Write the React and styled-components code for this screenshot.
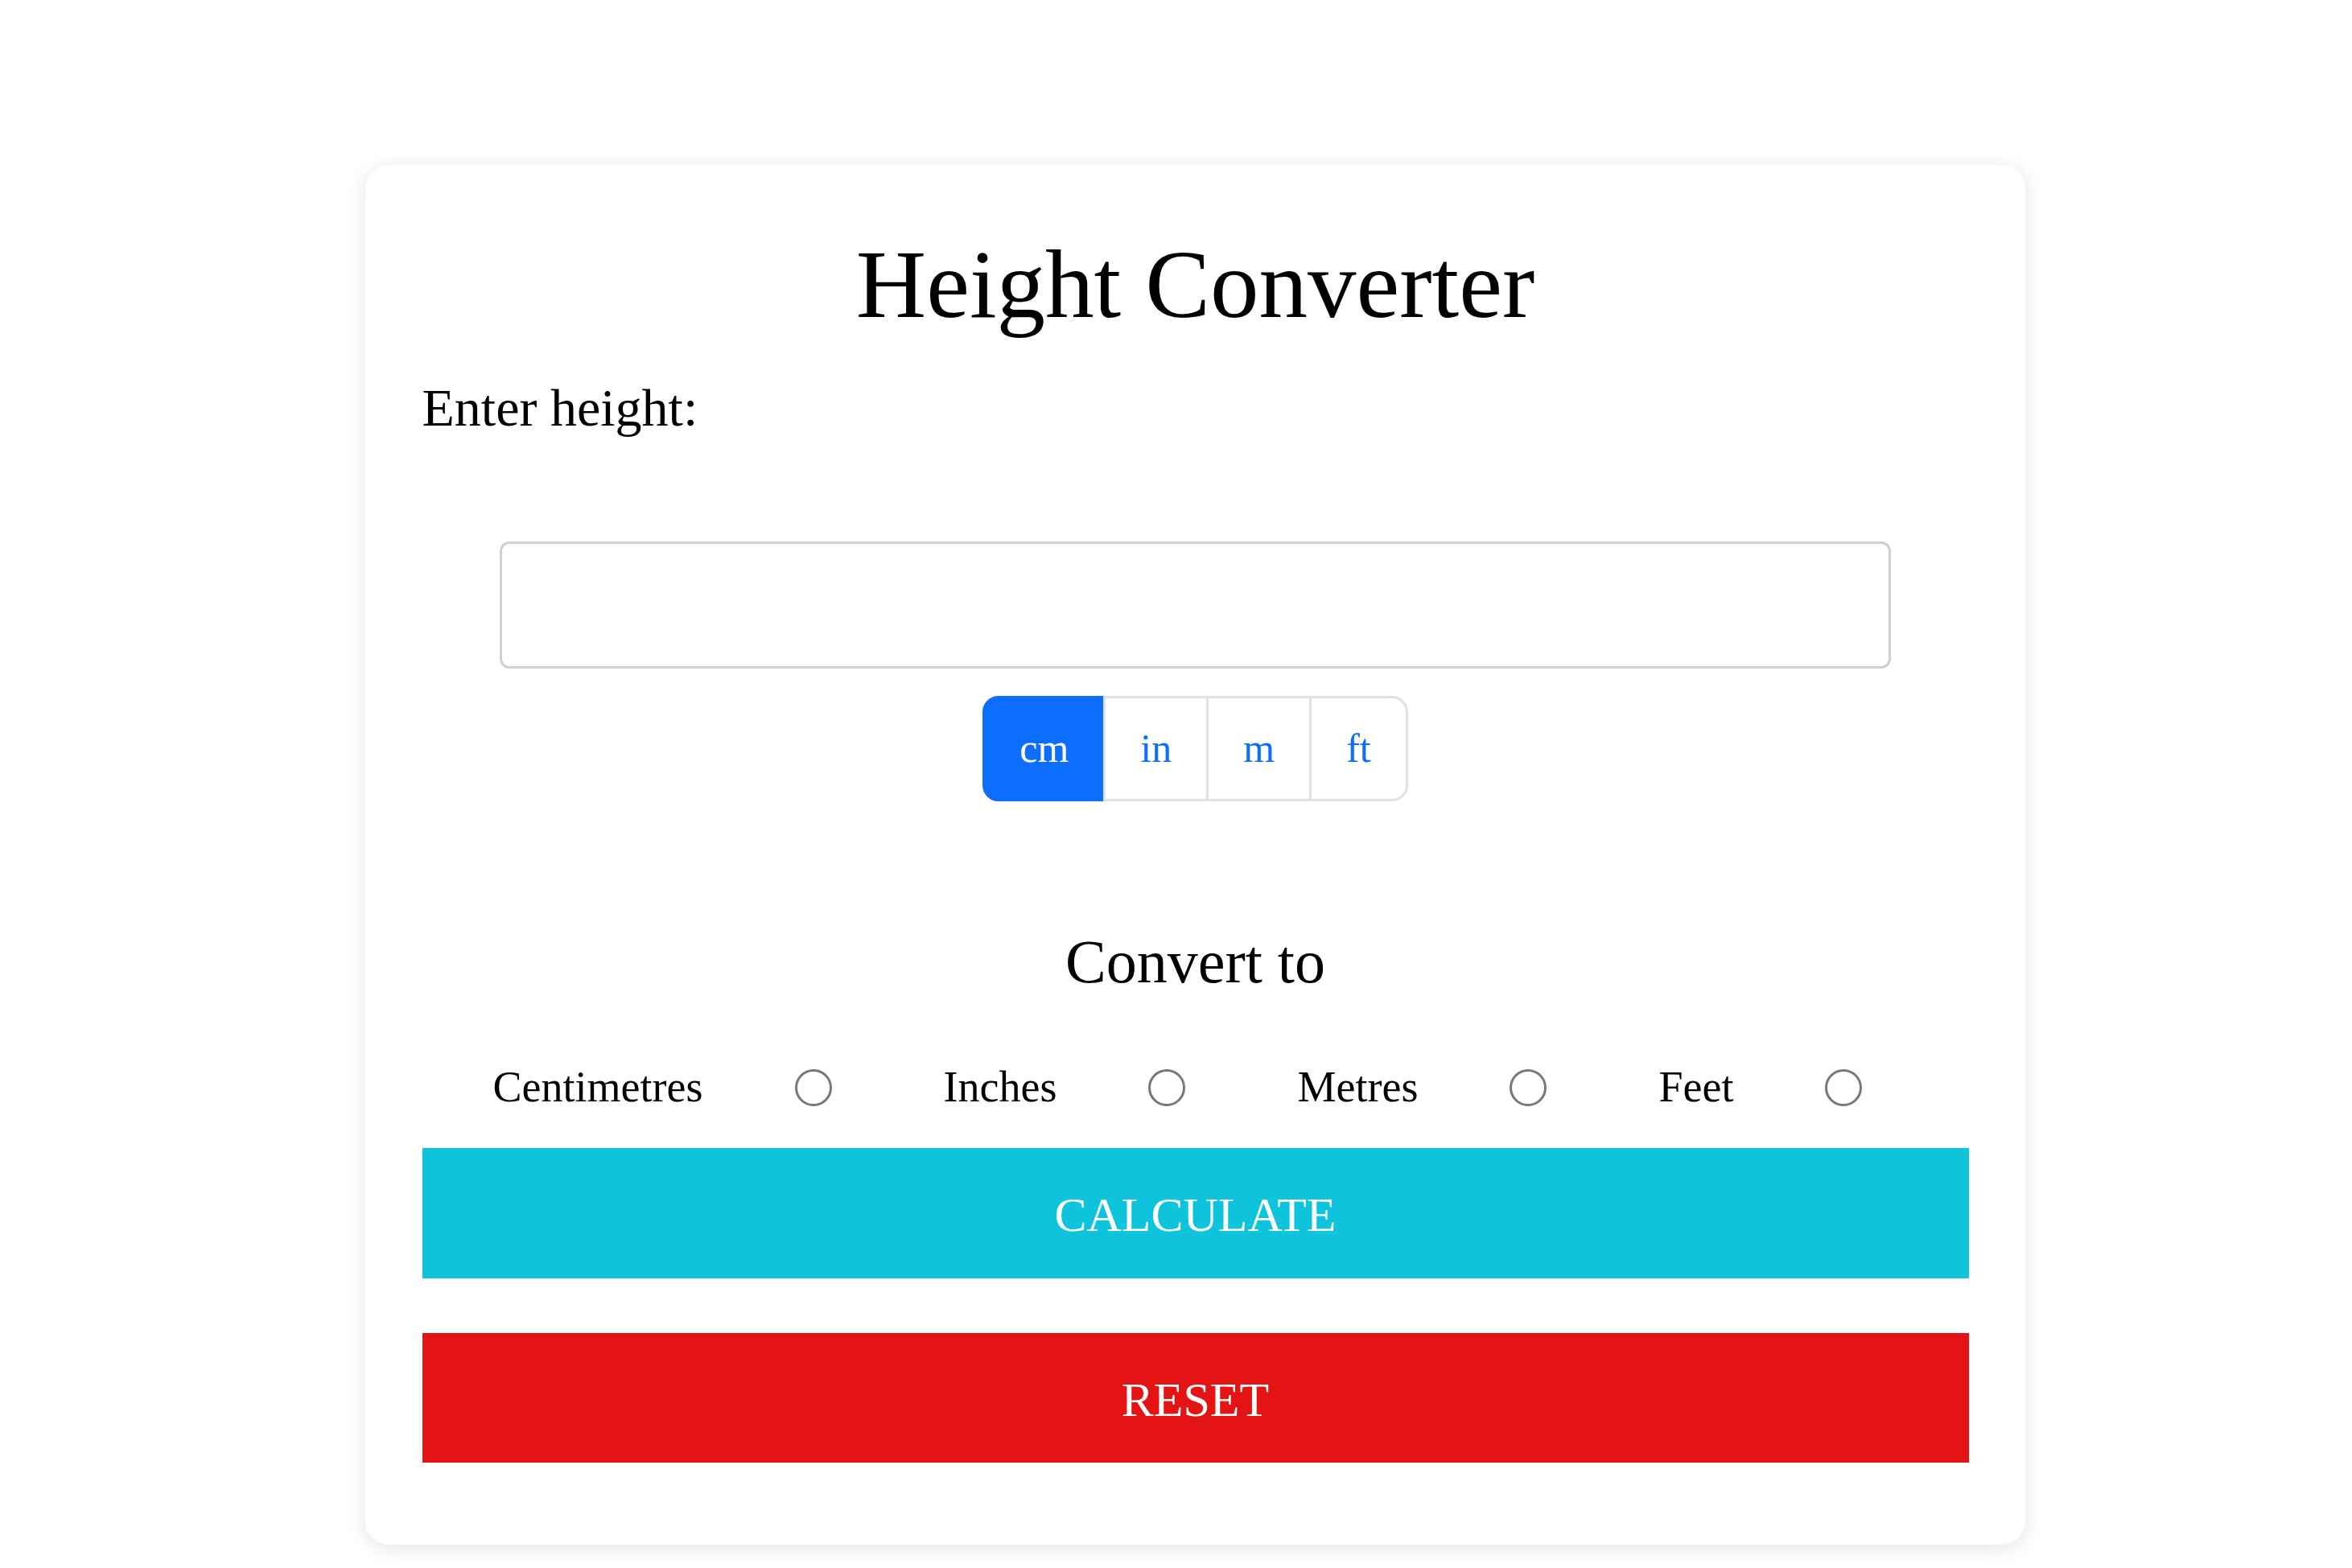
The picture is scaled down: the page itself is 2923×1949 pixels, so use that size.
import React, { useState } from "react";
import styled, { createGlobalStyle } from "styled-components";

const Global = createGlobalStyle`
  html, body { margin: 0; padding: 0; background: #ffffff; }
  body { font-family: "Liberation Serif", "Times New Roman", serif; color: #000; }
  * { box-sizing: border-box; }
`;

const Page = styled.div`
  display: flex;
  justify-content: center;
  padding: 205px 0 27px 47px;
`;

const Card = styled.div`
  width: 2063px;
  background: #fff;
  border-radius: 30px;
  box-shadow: 0 4px 26px rgba(0, 0, 0, 0.11);
  padding: 76px 70px 102px 71px;
  display: flex;
  flex-direction: column;
`;

const Title = styled.h1`
  margin: 0;
  font-weight: 400;
  font-size: 121px;
  line-height: 1.2;
  text-align: center;
`;

const Label = styled.div`
  margin-top: 31px;
  font-size: 66px;
  line-height: 1.5;
`;

const Input = styled.input`
  display: block;
  width: 90%;
  height: 158px;
  margin: 117px auto 0;
  border: 3px solid #d0d0d0;
  border-radius: 12px;
  background: #fff;
  font-family: inherit;
  font-size: 60px;
  padding: 0 24px;
  outline: none;
`;

const Group = styled.div`
  display: flex;
  align-self: center;
  margin-top: 34px;
`;

const UnitBtn = styled.button`
  font-family: "Liberation Serif", "Times New Roman", serif;
  font-size: 50px;
  line-height: 75px;
  padding: 25px 43px 25px;
  border: 3px solid ${(p) => (p.$active ? "#0d6efd" : "#dee2e6")};
  background: ${(p) => (p.$active ? "#0d6efd" : "#fff")};
  color: ${(p) => (p.$active ? "#fff" : "#0d6efd")};
  margin-left: -3px;
  border-radius: 0;
  cursor: pointer;
  &:first-child {
    margin-left: 0;
    border-radius: 20px 0 0 20px;
  }
  &:last-child {
    border-radius: 0 20px 20px 0;
  }
`;

const SubTitle = styled.h2`
  margin: 154px 0 0;
  font-weight: 400;
  font-size: 76px;
  line-height: 1.2;
  text-align: center;
`;

const Options = styled.div`
  margin-top: 70px;
  display: flex;
  justify-content: center;
  gap: 95px;
`;

const Option = styled.label`
  display: flex;
  align-items: center;
  gap: 114px;
  padding-right: 44px;
  font-size: 54px;
  line-height: 81px;
  cursor: pointer;
`;

const Radio = styled.span`
  width: 46px;
  height: 46px;
  border-radius: 50%;
  border: 3px solid #777;
  background: #fff;
  display: inline-block;
`;

const Action = styled.button`
  display: block;
  width: 100%;
  height: ${(p) => p.$h}px;
  border: none;
  border-radius: 0;
  margin-top: ${(p) => p.$mt}px;
  background: ${(p) => p.$bg};
  color: #fff;
  font-family: "Liberation Serif", "Times New Roman", serif;
  font-size: 60px;
  line-height: 1;
  padding: 4px 0 0;
  text-transform: uppercase;
  cursor: pointer;
`;

export default function App() {
  const [unit, setUnit] = useState("cm");
  const units = ["cm", "in", "m", "ft"];
  const opts = ["Centimetres", "Inches", "Metres", "Feet"];
  return (
    <>
      <Global />
      <Page>
        <Card>
          <Title>Height Converter</Title>
          <Label>Enter height:</Label>
          <Input type="text" />
          <Group>
            {units.map((u) => (
              <UnitBtn key={u} $active={unit === u} onClick={() => setUnit(u)}>
                {u}
              </UnitBtn>
            ))}
          </Group>
          <SubTitle>Convert to</SubTitle>
          <Options>
            {opts.map((o) => (
              <Option key={o}>
                {o}
                <Radio />
              </Option>
            ))}
          </Options>
          <Action $mt={35} $h={162} $bg="#0dc4dc">Calculate</Action>
          <Action $mt={68} $h={161} $bg="#e51414">Reset</Action>
        </Card>
      </Page>
    </>
  );
}
